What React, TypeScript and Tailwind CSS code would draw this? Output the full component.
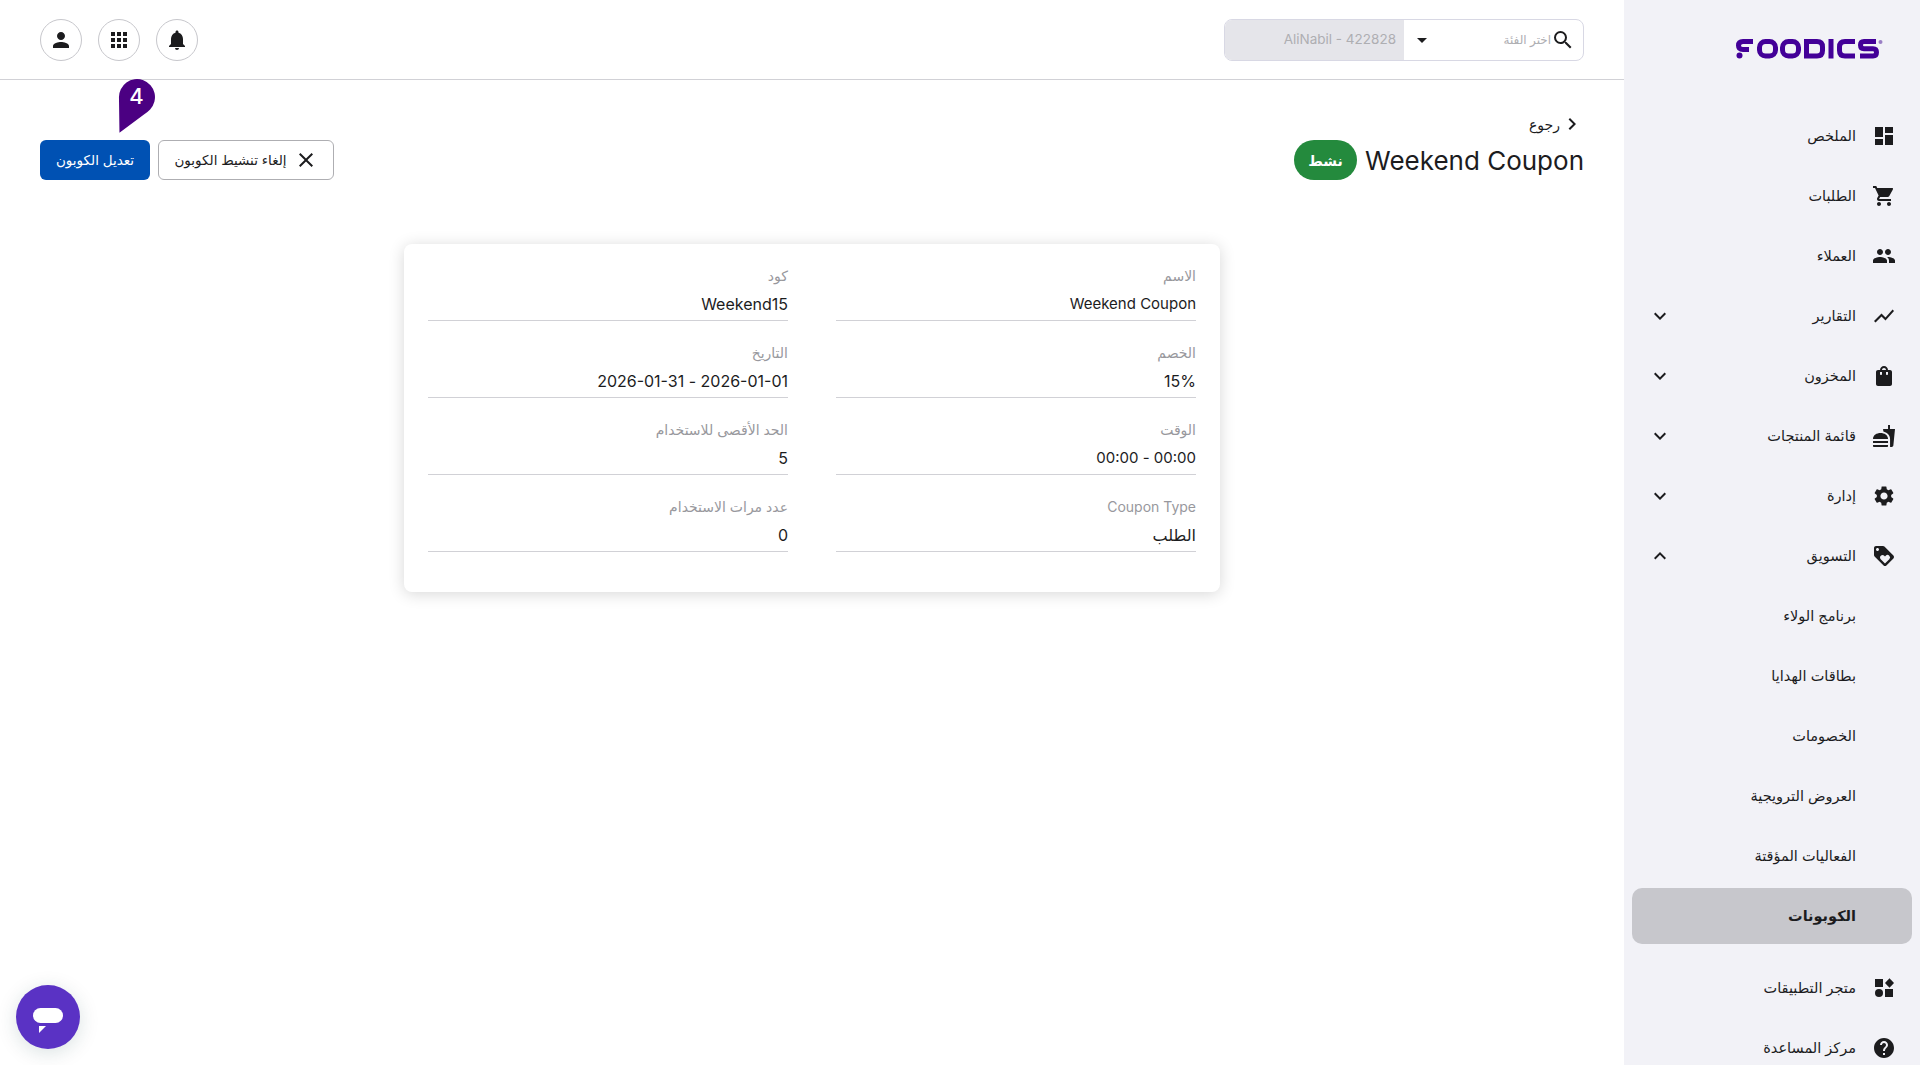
import React from "react";
import {
  MdDashboard, MdShoppingCart, MdPeople, MdShowChart, MdShoppingBag, MdFastfood, MdSettings, MdLoyalty, MdHelp,
  MdPerson, MdApps, MdNotifications, MdSearch, MdArrowDropDown, MdExpandMore, MdExpandLess, MdChevronRight, MdClose,
} from "react-icons/md";

const AppStore = (props: { size?: number }) => (
  <svg width={props.size ?? 24} height={props.size ?? 24} viewBox="0 0 24 24" fill="currentColor">
    <rect x="3" y="3" width="8" height="8" />
    <path d="M17.5 2.2 22 7l-4.500 4.800L13 7z" />
    <circle cx="7" cy="17" r="4" />
    <rect x="13" y="13" width="8" height="8" />
  </svg>
);

const Logo = () => (
  <svg width="149" height="20" viewBox="0 0 147 20" fill="none" stroke="#430098" strokeWidth="5">
    <path d="M17 2.500H7Q2.500 2.500 2.500 6.500Q2.500 10.500 7 10.500H13" />
    <circle cx="3.500" cy="16.500" r="3" fill="#430098" stroke="none" />
    <rect x="23.500" y="2.500" width="16" height="14.500" rx="6" />
    <rect x="46.500" y="2.500" width="16" height="14.500" rx="6" />
    <path d="M70.500 2.500H81Q86.500 2.500 86.500 8V11.500Q86.500 17 81 17H70.500Z" />
    <path d="M95 0V19.500" />
    <path d="M119 2.500H109Q103.500 2.500 103.500 8V11.500Q103.500 17 109 17H119" />
    <path d="M140 2.500H128Q124.500 2.500 124.500 6Q124.500 9.700 128 9.700H137Q140.500 9.700 140.500 13.300Q140.500 17 137 17H124" />
    <circle cx="144.500" cy="3" r="2" fill="#9a7fc4" stroke="none" />
  </svg>
);

type Nav = { label: string; Icon?: React.ComponentType<{ size?: number }>; chev?: "down" | "up"; active?: boolean };

const nav: Nav[] = [
  { label: "الملخص", Icon: MdDashboard },
  { label: "الطلبات", Icon: MdShoppingCart },
  { label: "العملاء", Icon: MdPeople },
  { label: "التقارير", Icon: MdShowChart, chev: "down" },
  { label: "المخزون", Icon: MdShoppingBag, chev: "down" },
  { label: "قائمة المنتجات", Icon: MdFastfood, chev: "down" },
  { label: "إدارة", Icon: MdSettings, chev: "down" },
  { label: "التسويق", Icon: MdLoyalty, chev: "up" },
  { label: "برنامج الولاء" },
  { label: "بطاقات الهدايا" },
  { label: "الخصومات" },
  { label: "العروض الترويجية" },
  { label: "الفعاليات المؤقتة" },
  { label: "الكوبونات", active: true },
];

const NavRow = ({ item }: { item: Nav }) => {
  const Icon = item.Icon;
  return (
    <div className="h-[60px] flex items-center px-2 shrink-0">
      <div className={`flex items-center h-14 w-full rounded-[10px] pr-4 pl-4 ${item.active ? "bg-[#c7c7cc] font-semibold" : ""}`}>
        <span className="w-6 h-6 ml-4 flex items-center justify-center shrink-0">{Icon ? <Icon size={24} /> : null}</span>
        <span className="flex-1 text-[14.500px] leading-5">{item.label}</span>
        {item.chev === "down" && <MdExpandMore size={24} />}
        {item.chev === "up" && <MdExpandLess size={24} />}
      </div>
    </div>
  );
};

const fields: [string, string, string][] = [
  ["الاسم", "Weekend Coupon", "text-[15px]"],
  ["كود", "Weekend15", "text-[16px]"],
  ["الخصم", "15%", "text-[16px]"],
  ["التاريخ", "2026-01-01 - 2026-01-31", "text-[16px]"],
  ["الوقت", "00:00 - 00:00", "text-[15px]"],
  ["الحد الأقصى للاستخدام", "5", "text-[16px]"],
  ["Coupon Type", "الطلب", "text-[16px]"],
  ["عدد مرات الاستخدام", "0", "text-[16px]"],
];

const CircleBtn = ({ children }: { children: React.ReactNode }) => (
  <button className="w-[42px] h-[42px] rounded-full border border-[#c7c7cc] flex items-center justify-center bg-white">{children}</button>
);

export default function App() {
  return (
    <div
      dir="rtl"
      className="relative flex h-screen w-full overflow-hidden bg-white text-[#1c1c1e]"
      style={{ fontFamily: 'Inter, "Noto Sans", "DejaVu Sans", sans-serif' }}
    >
      <aside className="w-[296px] shrink-0 bg-[#f2f2f7] h-full overflow-hidden flex flex-col">
        <div className="h-[106px] shrink-0 flex items-start pt-[39px] pr-[36px]">
          <Logo />
        </div>
        {nav.map((n) => (
          <NavRow key={n.label} item={n} />
        ))}
        <div className="mt-3">
          <NavRow item={{ label: "متجر التطبيقات", Icon: AppStore }} />
          <NavRow item={{ label: "مركز المساعدة", Icon: MdHelp }} />
        </div>
      </aside>

      <main className="flex-1 min-w-0 relative">
        <header className="h-20 border-b border-[#d1d1d6] px-10 flex items-center justify-between">
          <div className="w-[360px] h-[42px] border border-[#d8d8e4] rounded-lg flex overflow-hidden">
            <div className="flex-1 flex items-center pr-2 pl-[6px]">
              <MdSearch size={24} className="shrink-0" />
              <span className="text-[12px] text-[#aeaeb2] flex-1">اختر الفئة</span>
              <MdArrowDropDown size={24} />
            </div>
            <div className="w-[179px] bg-[#e5e5ea] flex items-center pr-2 text-[13.500px] text-[#aeaeb2]">AliNabil - 422828</div>
          </div>
          <div className="flex gap-4">
            <CircleBtn><MdNotifications size={24} /></CircleBtn>
            <CircleBtn><MdApps size={24} /></CircleBtn>
            <CircleBtn><MdPerson size={24} /></CircleBtn>
          </div>
        </header>

        <div className="px-10 pt-8">
          <div className="flex items-center h-6 mb-1 text-[14px]">
            <MdChevronRight size={24} />
            <span>رجوع</span>
          </div>
          <div className="flex items-center justify-between h-10">
            <div className="flex items-center gap-2">
              <h1 className="text-[26px] leading-10 font-normal mt-[2px]">Weekend Coupon</h1>
              <span className="h-10 w-[63px] rounded-full bg-[#248a3d] text-white font-semibold text-[14px] flex items-center justify-center">نشط</span>
            </div>
            <div className="flex gap-2">
              <button className="h-10 w-[176px] rounded-md border border-[#aeaeb2] bg-white flex items-center justify-center gap-[7px] text-[13.500px]">
                <MdClose size={24} />
                <span>إلغاء تنشيط الكوبون</span>
              </button>
              <button className="h-10 w-[110px] rounded-md bg-[#0051b3] text-white text-[13.500px]">تعديل الكوبون</button>
            </div>
          </div>

          <section className="mt-16 w-[816px] mx-auto rounded-lg bg-white shadow-[0_2px_16px_rgba(0,0,0,0.16)] px-6 pb-10 grid grid-cols-2 gap-x-12">
            {fields.map(([label, value, size]) => (
              <div key={label} className="h-[77px] pt-[22px] border-b border-[#d1d1d6]">
                <div className="text-[14px] leading-5 text-[#98989d]">{label}</div>
                <div className={`mt-[6px] leading-6 ${size}`}>{value}</div>
              </div>
            ))}
          </section>
        </div>
      </main>

      <div className="absolute left-[118px] top-[79px] w-[37px] h-[55px]" dir="ltr">
        <svg width="37" height="55" viewBox="0 0 38 56" className="absolute inset-0">
          <path d="M1.500 55 L1 19 A18.500 18.500 0 1 1 33 31 Q30 34 27 36 Z" fill="#4b0082" />
        </svg>
        <span className="absolute left-0 w-[37px] top-[3px] text-center text-white text-[22px] leading-7 font-medium">4</span>
      </div>

      <button className="absolute left-4 top-[985px] w-16 h-16 rounded-full bg-[#5a32c4] shadow-[0_4px_20px_rgba(0,60,60,0.15)]">
        <span className="absolute left-[17px] top-[23px] w-[30px] h-[15px] rounded-full bg-white" />
        <svg width="7" height="7" viewBox="0 0 7 7" className="absolute left-[23px] top-[41px]"><path d="M0 7V0h7z" fill="#fff" /></svg>
      </button>
    </div>
  );
}
